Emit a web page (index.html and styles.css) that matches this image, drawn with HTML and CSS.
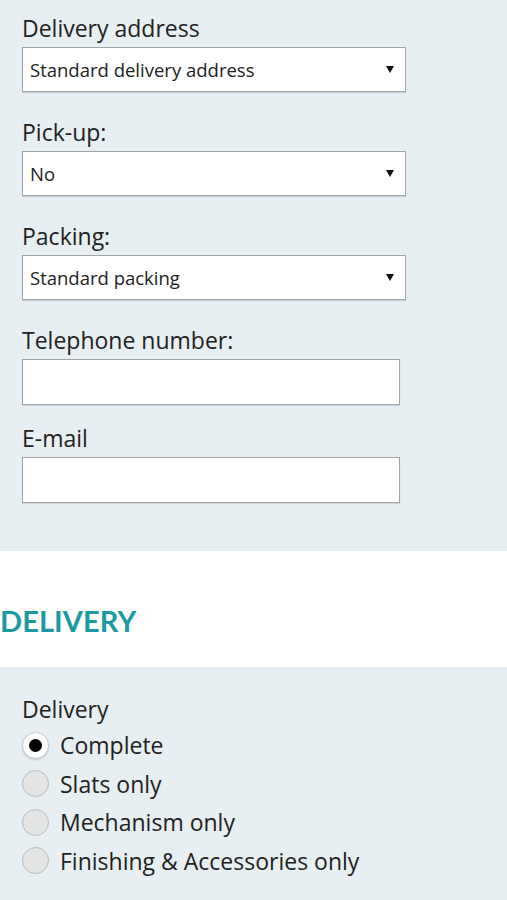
FILE: index.html
```html
<!DOCTYPE html>
<html lang="en">
<head>
<meta charset="utf-8">
<title>Delivery</title>
<link rel="stylesheet" href="styles.css">
</head>
<body>
<section class="panel panel--contact">
  <div class="field">
    <label class="label" for="addr">Delivery address</label>
    <div class="select">
      <select id="addr"><option>Standard delivery address</option></select>
      <svg class="arrow" width="8" height="7" viewBox="0 0 8 7"><path d="M0 0H8L4 7Z" fill="#111"/></svg>
    </div>
  </div>
  <div class="field">
    <label class="label" for="pick">Pick-up:</label>
    <div class="select">
      <select id="pick"><option>No</option></select>
      <svg class="arrow" width="8" height="7" viewBox="0 0 8 7"><path d="M0 0H8L4 7Z" fill="#111"/></svg>
    </div>
  </div>
  <div class="field">
    <label class="label" for="pack">Packing:</label>
    <div class="select">
      <select id="pack"><option>Standard packing</option></select>
      <svg class="arrow" width="8" height="7" viewBox="0 0 8 7"><path d="M0 0H8L4 7Z" fill="#111"/></svg>
    </div>
  </div>
  <div class="field field--text">
    <label class="label" for="tel">Telephone number:</label>
    <input class="input" id="tel" type="text">
  </div>
  <div class="field field--text field--tight">
    <label class="label" for="mail">E-mail</label>
    <input class="input" id="mail" type="text">
  </div>
</section>

<div class="band">
  <h2 class="heading">DELIVERY</h2>
</div>

<section class="panel panel--delivery">
  <div class="label">Delivery</div>
  <div class="radios">
    <label class="radio"><span class="dot dot--on"></span><span>Complete</span></label>
    <label class="radio"><span class="dot"></span><span>Slats only</span></label>
    <label class="radio"><span class="dot"></span><span>Mechanism only</span></label>
    <label class="radio"><span class="dot"></span><span>Finishing &amp; Accessories only</span></label>
  </div>
</section>
</body>
</html>
```

FILE: styles.css
```css
* { box-sizing: border-box; }
html, body { margin: 0; padding: 0; }
body {
  background: #ffffff;
  font-family: "Open Sans", Lato, sans-serif;
  color: #222222;
  width: 507px;
}
.panel {
  background: #e7eff2;
  padding: 0 22px;
}
.panel--contact {
  padding-top: 15px;
  padding-bottom: 48px;
}
.field {
  display: flex;
  flex-direction: column;
  gap: 6px;
}
.field + .field { margin-top: 27px; }
.field + .field--tight { margin-top: 20px; }
.label {
  display: block;
  font-size: 23px;
  line-height: 26px;
  color: #222;
}
.select {
  display: grid;
  width: 384px;
  height: 45px;
  background: #fff;
  border: 1px solid #a3a6a8;
  box-shadow: 0 1px 1px rgba(0,0,0,0.12);
  align-items: center;
}
.select select {
  grid-area: 1 / 1;
  appearance: none;
  -webkit-appearance: none;
  border: 0;
  background: transparent;
  font-family: "Open Sans", Lato, sans-serif;
  font-size: 18.5px;
  color: #222;
  padding: 0 0 0 7px;
  height: 100%;
  width: 100%;
  outline: none;
}
.select .arrow {
  grid-area: 1 / 1;
  justify-self: end;
  margin-right: 11px;
  pointer-events: none;
}
.input {
  display: block;
  width: 378px;
  height: 46px;
  background: #fff;
  border: 1px solid #a3a6a8;
  box-shadow: 0 1px 1px rgba(0,0,0,0.1);
  font-family: "Open Sans", Lato, sans-serif;
  font-size: 18px;
  padding: 0 8px;
  margin: 0;
  outline: none;
}
.band {
  background: #fff;
  padding: 53px 0 29px;
}
.heading {
  margin: 0;
  font-family: Lato, "Open Sans", sans-serif;
  font-size: 29px;
  line-height: 34px;
  font-weight: 700;
  color: #1b9aa1;
  letter-spacing: 0.1px;
}
.panel--delivery {
  padding-top: 29px;
  padding-bottom: 20px;
}
.radios {
  display: flex;
  flex-direction: column;
  margin-top: 4px;
}
.radio {
  display: flex;
  align-items: center;
  height: 38.5px;
  font-size: 23px;
  color: #222;
}
.dot {
  width: 27px;
  height: 27px;
  border-radius: 50%;
  background: #e3e4e4;
  border: 1px solid #b9bbbc;
  margin-right: 11px;
  display: grid;
  place-items: center;
  flex: none;
}
.dot--on {
  background: #fff;
  border-color: #c8cacb;
  box-shadow: 0 1px 2px rgba(0,0,0,0.15);
}
.dot--on::after {
  content: "";
  width: 13px;
  height: 13px;
  border-radius: 50%;
  background: #000;
}
```
